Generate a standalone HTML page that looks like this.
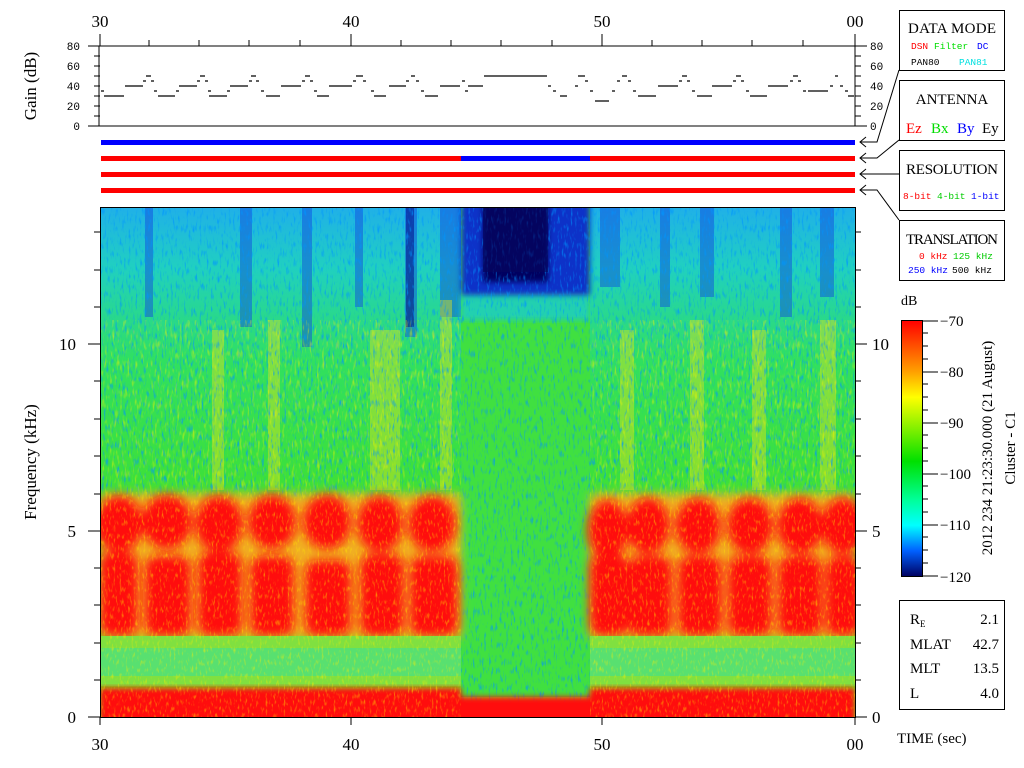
<!DOCTYPE html>
<html><head><meta charset="utf-8"><style>
html,body{margin:0;padding:0;background:#fff;width:1024px;height:768px;overflow:hidden}
svg{position:absolute;left:0;top:0}
.t{font-family:"Liberation Serif",serif;font-size:17px;fill:#000}
.m{font-family:"Liberation Mono",monospace;font-size:11px}
</style></head><body>
<svg width="1024" height="768" viewBox="0 0 1024 768">
<defs>
<linearGradient id="up" x1="0" y1="0" x2="0" y2="1">
<stop offset="0" stop-color="#20b0e8"/><stop offset="0.12" stop-color="#20d0c0"/><stop offset="0.3" stop-color="#30e060"/><stop offset="0.6" stop-color="#40e030"/><stop offset="1" stop-color="#80e020"/>
</linearGradient>
<linearGradient id="cb" x1="0" y1="0" x2="0" y2="1">
<stop offset="0" stop-color="#ff0000"/><stop offset="0.2" stop-color="#ffa000"/><stop offset="0.3" stop-color="#ffff00"/><stop offset="0.55" stop-color="#00e000"/><stop offset="0.7" stop-color="#00ff99"/><stop offset="0.8" stop-color="#00ffff"/><stop offset="0.9" stop-color="#0060ff"/><stop offset="1" stop-color="#000060"/>
</linearGradient>
<filter id="nz" x="0" y="0" width="100%" height="100%">
<feTurbulence type="fractalNoise" baseFrequency="0.45 0.12" numOctaves="2" seed="3"/>
<feColorMatrix type="matrix" values="0 0 0 0 0  0 0 0 0 0.3  0 0 0 0 1  3 0 0 0 -1.6"/>
</filter>
<filter id="nz2" x="0" y="0" width="100%" height="100%">
<feTurbulence type="fractalNoise" baseFrequency="0.4 0.1" numOctaves="2" seed="7"/>
<feColorMatrix type="matrix" values="0 0 0 0 1  0 0 0 0 0.9  0 0 0 0 0  3 0 0 0 -1.6"/>
</filter>
<filter id="nz3" x="0" y="0" width="100%" height="100%">
<feTurbulence type="fractalNoise" baseFrequency="0.5 0.15" numOctaves="2" seed="11"/>
<feColorMatrix type="matrix" values="0 0 0 0 1  0 0 0 0 0.85  0 0 0 0 0  3 0 0 0 -1.6"/>
</filter>
<filter id="bl"><feGaussianBlur stdDeviation="5"/></filter>
<filter id="bl2"><feGaussianBlur stdDeviation="3"/></filter>
<clipPath id="sp"><rect x="100" y="207" width="755" height="510"/></clipPath>
</defs>

<g clip-path="url(#sp)">
<rect x="100" y="207" width="755" height="510" fill="url(#up)"/>
<g fill="#1040e0" opacity="0.45">
<rect x="145" y="207" width="8" height="110"/><rect x="240" y="207" width="12" height="120"/><rect x="302" y="207" width="10" height="140"/>
<rect x="355" y="207" width="8" height="100"/><rect x="405" y="207" width="12" height="130"/><rect x="440" y="207" width="21" height="110"/>
<rect x="600" y="207" width="20" height="80"/><rect x="660" y="207" width="10" height="100"/><rect x="700" y="207" width="14" height="90"/><rect x="780" y="207" width="12" height="110"/><rect x="820" y="207" width="14" height="90"/>
</g>
<rect x="406" y="207" width="8" height="120" fill="#000080" opacity="0.5"/>
<g fill="#e0e020" opacity="0.45">
<rect x="212" y="330" width="12" height="160"/><rect x="268" y="320" width="12" height="170"/><rect x="370" y="330" width="30" height="160"/><rect x="440" y="300" width="12" height="190"/>
<rect x="620" y="330" width="14" height="160"/><rect x="690" y="320" width="14" height="170"/><rect x="752" y="330" width="14" height="160"/><rect x="820" y="320" width="16" height="170"/>
</g>
<!-- middle quiet region -->
<rect x="461" y="207" width="129" height="490" fill="#40e040"/>
<rect x="461" y="290" width="129" height="30" fill="#20d0b0" filter="url(#bl2)"/>
<rect x="461" y="200" width="129" height="95" fill="#1030c8" filter="url(#bl2)"/>
<rect x="483" y="200" width="65" height="82" fill="#060660" filter="url(#bl2)"/>
<rect x="461" y="207" width="129" height="510" filter="url(#nz)" opacity="0.7"/>
<rect x="483" y="207" width="65" height="65" fill="#060660" opacity="0.7"/>
<rect x="100" y="207" width="361" height="290" filter="url(#nz)" opacity="0.75"/>
<rect x="590" y="207" width="265" height="290" filter="url(#nz)" opacity="0.75"/>
<rect x="100" y="320" width="361" height="180" filter="url(#nz2)" opacity="0.5"/>
<rect x="590" y="320" width="265" height="180" filter="url(#nz2)" opacity="0.5"/>
<!-- red blob region -->
<g filter="url(#bl)">
<rect x="100" y="494" width="361" height="144" fill="#f0b020"/>
<rect x="590" y="494" width="265" height="144" fill="#f0b020"/>
</g>
<g fill="#ff1010" filter="url(#bl)">
<ellipse cx="119" cy="524" rx="24" ry="28"/><ellipse cx="167" cy="522" rx="25" ry="27"/><ellipse cx="219" cy="524" rx="24" ry="28"/><ellipse cx="272" cy="522" rx="24" ry="27"/><ellipse cx="327" cy="522" rx="24" ry="27"/><ellipse cx="380" cy="524" rx="23" ry="28"/><ellipse cx="432" cy="524" rx="24" ry="28"/>
<rect x="100" y="552" width="38" height="84" rx="12"/><rect x="145" y="556" width="46" height="80" rx="12"/><rect x="198" y="552" width="44" height="84" rx="12"/><rect x="250" y="556" width="44" height="80" rx="12"/><rect x="305" y="560" width="46" height="76" rx="12"/><rect x="360" y="554" width="44" height="82" rx="12"/><rect x="410" y="556" width="48" height="80" rx="12"/>
<ellipse cx="608" cy="530" rx="20" ry="30"/><ellipse cx="648" cy="526" rx="22" ry="28"/><ellipse cx="698" cy="526" rx="23" ry="28"/><ellipse cx="750" cy="526" rx="23" ry="28"/><ellipse cx="800" cy="526" rx="23" ry="28"/><ellipse cx="843" cy="526" rx="22" ry="28"/>
<rect x="590" y="554" width="38" height="82" rx="12"/><rect x="628" y="556" width="44" height="80" rx="12"/><rect x="678" y="556" width="44" height="80" rx="12"/><rect x="728" y="556" width="44" height="80" rx="12"/><rect x="778" y="556" width="44" height="80" rx="12"/><rect x="826" y="556" width="34" height="80" rx="12"/>
</g>
<rect x="100" y="636" width="361" height="50" fill="#80e040"/>
<rect x="590" y="636" width="265" height="50" fill="#80e040"/>
<rect x="100" y="648" width="361" height="28" fill="#30e0a0" opacity="0.5"/>
<rect x="590" y="648" width="265" height="28" fill="#30e0a0" opacity="0.5"/>
<g fill="#ff1010" filter="url(#bl2)">
<rect x="100" y="688" width="361" height="40"/><rect x="590" y="688" width="265" height="40"/>
<rect x="461" y="697" width="129" height="30"/>
</g>
<rect x="100" y="492" width="361" height="225" filter="url(#nz3)" opacity="0.5"/>
<rect x="590" y="492" width="265" height="225" filter="url(#nz3)" opacity="0.5"/>
</g>
<rect x="100.5" y="207.5" width="755" height="510" fill="none" stroke="#000"/>

<g stroke="#000" stroke-width="1">
<path d="M100 717v8M351 717v8M602 717v8M855 717v8"/>
<path d="M88 717h12M88 531h12M88 344h12M94 680h6M94 643h6M94 605h6M94 568h6M94 494h6M94 456h6M94 419h6M94 381h6M94 307h6M94 270h6M94 232h6"/>
<path d="M855 717h12M855 531h12M855 344h12M855 680h6M855 643h6M855 605h6M855 568h6M855 494h6M855 456h6M855 419h6M855 381h6M855 307h6M855 270h6M855 232h6"/>
</g>
<g class="t" text-anchor="middle">
<text x="100" y="750">30</text><text x="351" y="750">40</text><text x="602" y="750">50</text><text x="855" y="750">00</text>
<text x="100" y="27">30</text><text x="351" y="27">40</text><text x="602" y="27">50</text><text x="855" y="27">00</text>
</g>
<g class="t" text-anchor="end"><text x="76" y="723">0</text><text x="76" y="537">5</text><text x="76" y="350">10</text></g>
<g class="t"><text x="872" y="723">0</text><text x="872" y="537">5</text><text x="872" y="350">10</text></g>
<text class="t" transform="translate(36,462) rotate(-90)" text-anchor="middle">Frequency (kHz)</text>
<text class="t" transform="translate(36,86) rotate(-90)" text-anchor="middle">Gain (dB)</text>

<rect x="99" y="46" width="756" height="80" fill="none" stroke="#000"/>
<g stroke="#000">
<path d="M100 34v12M149 40v6M199 40v6M249 40v6M300 40v6M351 34v12M401 40v6M451 40v6M501 40v6M552 40v6M602 34v12M652 40v6M702 40v6M752 40v6M803 40v6M855 34v12"/>
<path d="M88 46h12M94 56h6M94 66h6M94 76h6M94 86h6M94 96h6M94 106h6M94 116h6M88 126h12"/>
<path d="M855 46h12M855 56h6M855 66h6M855 76h6M855 86h6M855 96h6M855 106h6M855 116h6M855 126h12"/>
</g>
<g class="m" text-anchor="end"><text x="80" y="50">80</text><text x="80" y="70">60</text><text x="80" y="90">40</text><text x="80" y="110">20</text><text x="80" y="130">0</text></g>
<g class="m"><text x="870" y="50">80</text><text x="870" y="70">60</text><text x="870" y="90">40</text><text x="870" y="110">20</text><text x="870" y="130">0</text></g>
<g stroke="#000" stroke-width="1.2" fill="none">
<path d="M101 91h3M104 96h20M125 86h18M143 81h3M146 76h5M151 81h3M154 91h3M158 96h17M176 91h3M179 86h18M197 81h3M200 76h5M205 81h3M208 91h3M209 96h18M227 91h3M230 86h18M249 81h3M251 76h5M256 81h3M261 91h3M266 96h14M281 86h20M302 81h3M305 76h5M310 81h3M314 91h3M317 96h12M329 86h23M353 81h3M356 76h7M363 81h3M371 91h3M374 96h12M389 86h17M406 81h3M411 76h4M416 81h3M421 91h3M425 96h13M440 86h20M462 81h3M465 91h3M468 86h15M484 76h63M548 86h3M553 91h3M560 96h7M575 86h3M578 76h7M585 81h3M590 91h3M595 101h14M612 91h3M617 81h3M622 76h5M628 81h3M633 91h3M638 96h18M658 86h20M679 81h3M682 76h5M687 81h3M692 91h3M697 96h15M712 86h20M733 81h3M736 76h5M741 81h3M746 91h3M750 96h17M768 86h20M790 81h3M793 76h5M798 81h3M803 91h3M808 91h20M830 86h3M835 76h3M840 86h3M845 91h3M848 96h6"/>
</g>

<rect x="101" y="140" width="754" height="5" fill="#0000ff"/>
<rect x="101" y="156" width="754" height="5" fill="#ff0000"/>
<rect x="461" y="156" width="129" height="5" fill="#0000ff"/>
<rect x="101" y="172" width="754" height="5" fill="#ff0000"/>
<rect x="101" y="188" width="754" height="5" fill="#ff0000"/>

<g stroke="#000" fill="none">
<path d="M899 70L877 142H860M866 137L860 142L866 147"/>
<path d="M899 140L877 158H860M866 153L860 158L866 163"/>
<path d="M899 174H860M866 169L860 174L866 179"/>
<path d="M899 220L877 190H860M866 185L860 190L866 195"/>
</g>
<g fill="#fff" stroke="#000">
<rect x="899.5" y="10.5" width="105" height="60"/>
<rect x="899.5" y="80.5" width="105" height="60"/>
<rect x="899.5" y="150.5" width="105" height="60"/>
<rect x="899.5" y="220.5" width="105" height="60"/>
</g>
<g class="t" text-anchor="middle" style="font-size:15px">
<text x="952" y="33" textLength="88">DATA MODE</text><text x="952" y="104">ANTENNA</text><text x="952" y="174" textLength="92">RESOLUTION</text><text x="952" y="244" textLength="92">TRANSLATION</text>
</g>
<g class="m" style="font-size:9.5px">
<text x="911" y="49" fill="#ff0000">DSN</text><text x="934" y="49" fill="#00dd00">Filter</text><text x="977" y="49" fill="#0000ff">DC</text>
<text x="911" y="65" fill="#000">PAN80</text><text x="959" y="65" fill="#00e0e0">PAN81</text>
<text x="903" y="199" fill="#ff0000">8-bit</text><text x="937" y="199" fill="#00cc00">4-bit</text><text x="971" y="199" fill="#0000ff">1-bit</text>
<text x="919" y="259" fill="#ff0000">0 kHz</text><text x="953" y="259" fill="#00cc00">125 kHz</text>
<text x="908" y="273" fill="#0000ff">250 kHz</text><text x="952" y="273" fill="#000">500 kHz</text>
</g>
<g class="t" style="font-size:15px">
<text x="906" y="133" fill="#ff0000">Ez</text><text x="931" y="133" fill="#00dd00">Bx</text><text x="957" y="133" fill="#0000ff">By</text><text x="982" y="133" fill="#000">Ey</text>
</g>

<text class="t" x="901" y="305" style="font-size:14px">dB</text>
<rect x="901.5" y="320.5" width="21" height="256" fill="url(#cb)" stroke="#000"/>
<g stroke="#000"><path d="M922 321h16M922 372h16M922 423h16M922 474h16M922 525h16M922 576h16M922 333h6M922 346h6M922 359h6M922 384h6M922 397h6M922 410h6M922 435h6M922 448h6M922 461h6M922 486h6M922 499h6M922 512h6M922 537h6M922 550h6M922 563h6"/></g>
<g class="t" style="font-size:15px"><text x="940" y="326">−70</text><text x="940" y="377">−80</text><text x="940" y="428">−90</text><text x="940" y="479">−100</text><text x="940" y="530">−110</text><text x="940" y="582">−120</text></g>
<text class="t" style="font-size:15px" transform="translate(992,448) rotate(-90)" text-anchor="middle">2012 234 21:23:30.000 (21 August)</text>
<text class="t" style="font-size:15px" transform="translate(1015,448) rotate(-90)" text-anchor="middle">Cluster - C1</text>

<rect x="899.5" y="600.5" width="105" height="109" fill="none" stroke="#000"/>
<g class="t" style="font-size:15px">
<text x="910" y="624">R<tspan style="font-size:9px" dy="3">E</tspan></text><text x="910" y="649">MLAT</text><text x="910" y="673">MLT</text><text x="910" y="698">L</text>
</g>
<g class="t" style="font-size:15px" text-anchor="end">
<text x="999" y="624">2.1</text><text x="999" y="649">42.7</text><text x="999" y="673">13.5</text><text x="999" y="698">4.0</text>
</g>
<text class="t" x="897" y="743" style="font-size:15px">TIME (sec)</text>
</svg>
</body></html>
